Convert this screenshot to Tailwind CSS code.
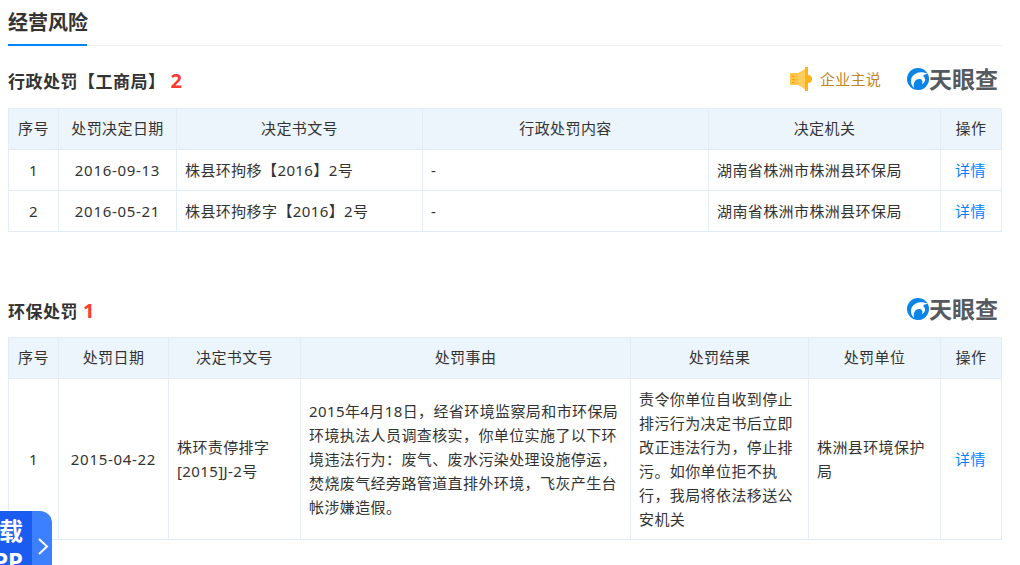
<!DOCTYPE html>
<html lang="zh-CN">
<head>
  <meta charset="UTF-8">
  <title>经营风险</title>
  <script src="https://cdn.jsdelivr.net/npm/@tailwindcss/browser@4"></script>
</head>
<body class="relative h-[565px] w-[1020px] overflow-hidden bg-white font-['Noto_Sans','Noto_Sans_CJK_SC',sans-serif] text-[15px] tracking-[0.4px] text-[#333]">
  <div class="pl-2 pr-[18px]">
    <!-- Section title -->
    <div class="h-[46px] border-b border-[#f0f2f5]">
      <div class="inline-block h-[46px] w-[79px] border-b-2 border-[#0084ff] pt-[6px] text-[20px] leading-[34px] font-bold tracking-normal whitespace-nowrap text-[#333]">经营风险</div>
    </div>

    <!-- 行政处罚 -->
    <div class="mt-[17px] flex h-[45px] items-center justify-between pb-[8px]">
      <div class="text-[17px] font-bold tracking-[0.5px]">行政处罚【工商局】<span class="ml-[5px] text-[20px] leading-[20px] text-[#ff3b30]">2</span></div>
      <div class="mr-[4px] -mt-[5px] flex items-center">
        <svg width="22" height="24" viewBox="0 0 22 24" class="mr-[8px]">
          <rect x="0" y="6" width="8" height="12" fill="#ffc444"/>
          <rect x="2" y="9" width="3" height="1" fill="#f5a623"/>
          <rect x="2" y="12" width="3" height="1" fill="#f5a623"/>
          <rect x="2" y="15" width="3" height="1" fill="#f5a623"/>
          <path d="M8 6 L15 2 V22 L8 18 Z" fill="#ffcd5c"/>
          <rect x="15" y="0" width="3" height="24" fill="#ffb31a"/>
          <path d="M18 8 a4 4 0 0 1 0 8 Z" fill="#ffb31a"/>
        </svg>
        <span class="mr-[26px] text-[15px] tracking-[0.25px] text-[#c2851f]">企业主说</span>
        <svg width="22" height="22" viewBox="0 0 22 22">
          <circle cx="11" cy="11" r="11" fill="#0a84e8"/>
          <path d="M21 6 C15 3 8 4 5 9 C3 13 4 17 7 20 C6 15 8 11 12 11 C15 11 16 13 15 16 C18 15 19 11 17 9 C15 7 18 6 21 6 Z" fill="#fff"/>
          <path d="M9 21 C9 17 11 14 13 14 C13 17 15 19 18 19 C15 22 12 22 9 21 Z" fill="#0a84e8"/>
        </svg>
        <span class="text-[23px] leading-[24px] font-bold tracking-normal text-[#555a60]">天眼查</span>
      </div>
    </div>
    <table class="w-[994px] table-fixed border-collapse border border-[#e3edf6]">
      <colgroup>
        <col class="w-[50px]"><col class="w-[118px]"><col class="w-[246px]"><col class="w-[286px]"><col class="w-[232px]"><col class="w-[61px]">
      </colgroup>
      <thead class="bg-[#edf5fc]">
        <tr class="h-[41px] text-center">
          <th class="border border-[#e3edf6] pb-[1px] font-normal">序号</th>
          <th class="border border-[#e3edf6] pb-[1px] font-normal">处罚决定日期</th>
          <th class="border border-[#e3edf6] pb-[1px] font-normal">决定书文号</th>
          <th class="border border-[#e3edf6] pb-[1px] font-normal">行政处罚内容</th>
          <th class="border border-[#e3edf6] pb-[1px] font-normal">决定机关</th>
          <th class="border border-[#e3edf6] pb-[1px] font-normal">操作</th>
        </tr>
      </thead>
      <tbody>
        <tr class="h-[41px]">
          <td class="border border-[#e3edf6] text-center">1</td>
          <td class="border border-[#e3edf6] text-center tracking-[0.7px]">2016-09-13</td>
          <td class="border border-[#e3edf6] px-2">株县环拘移【2016】2号</td>
          <td class="border border-[#e3edf6] px-2">-</td>
          <td class="border border-[#e3edf6] px-2">湖南省株洲市株洲县环保局</td>
          <td class="border border-[#e3edf6] pr-[1px] text-center text-[#0084ff]">详情</td>
        </tr>
        <tr class="h-[41px]">
          <td class="border border-[#e3edf6] text-center">2</td>
          <td class="border border-[#e3edf6] text-center tracking-[0.7px]">2016-05-21</td>
          <td class="border border-[#e3edf6] px-2">株县环拘移字【2016】2号</td>
          <td class="border border-[#e3edf6] px-2">-</td>
          <td class="border border-[#e3edf6] px-2">湖南省株洲市株洲县环保局</td>
          <td class="border border-[#e3edf6] pr-[1px] text-center text-[#0084ff]">详情</td>
        </tr>
      </tbody>
    </table>

    <!-- 环保处罚 -->
    <div class="mt-[54px] flex h-[51px] items-center justify-between">
      <div class="text-[17px] font-bold tracking-[0.5px]">环保处罚<span class="ml-[5px] text-[20px] leading-[20px] text-[#ff3b30]">1</span></div>
      <div class="mr-[4px] -mt-[5px] flex items-center">
        <svg width="22" height="22" viewBox="0 0 22 22">
          <circle cx="11" cy="11" r="11" fill="#0a84e8"/>
          <path d="M21 6 C15 3 8 4 5 9 C3 13 4 17 7 20 C6 15 8 11 12 11 C15 11 16 13 15 16 C18 15 19 11 17 9 C15 7 18 6 21 6 Z" fill="#fff"/>
          <path d="M9 21 C9 17 11 14 13 14 C13 17 15 19 18 19 C15 22 12 22 9 21 Z" fill="#0a84e8"/>
        </svg>
        <span class="text-[23px] leading-[24px] font-bold tracking-normal text-[#555a60]">天眼查</span>
      </div>
    </div>
    <table class="w-[994px] table-fixed border-collapse border border-[#e3edf6]">
      <colgroup>
        <col class="w-[50px]"><col class="w-[110px]"><col class="w-[132px]"><col class="w-[330px]"><col class="w-[178px]"><col class="w-[132px]"><col class="w-[61px]">
      </colgroup>
      <thead class="bg-[#edf5fc]">
        <tr class="h-[41px] text-center">
          <th class="border border-[#e3edf6] pb-[1px] font-normal">序号</th>
          <th class="border border-[#e3edf6] pb-[1px] font-normal">处罚日期</th>
          <th class="border border-[#e3edf6] pb-[1px] font-normal">决定书文号</th>
          <th class="border border-[#e3edf6] pb-[1px] font-normal">处罚事由</th>
          <th class="border border-[#e3edf6] pb-[1px] font-normal">处罚结果</th>
          <th class="border border-[#e3edf6] pb-[1px] font-normal">处罚单位</th>
          <th class="border border-[#e3edf6] pb-[1px] font-normal">操作</th>
        </tr>
      </thead>
      <tbody>
        <tr class="h-[161px] leading-[24px]">
          <td class="border border-[#e3edf6] text-center">1</td>
          <td class="border border-[#e3edf6] text-center tracking-[0.7px]">2015-04-22</td>
          <td class="border border-[#e3edf6] px-2">株环责停排字[2015]J-2号</td>
          <td class="border border-[#e3edf6] px-2">2015年4月18日，经省环境监察局和市环保局环境执法人员调查核实，你单位实施了以下环境违法行为：废气、废水污染处理设施停运，焚烧废气经旁路管道直排外环境，飞灰产生台帐涉嫌造假。</td>
          <td class="border border-[#e3edf6] px-2">责令你单位自收到停止排污行为决定书后立即改正违法行为，停止排污。如你单位拒不执行，我局将依法移送公安机关</td>
          <td class="border border-[#e3edf6] px-2">株洲县环境保护局</td>
          <td class="border border-[#e3edf6] pr-[1px] text-center text-[#0084ff]">详情</td>
        </tr>
      </tbody>
    </table>
  </div>

  <!-- Floating download badge, cut off by the window -->
  <div class="absolute top-[511px] left-0 flex h-[80px] w-[52px] overflow-hidden rounded-tr-[12px] bg-[#3d80ff]">
    <div class="w-[32px] overflow-hidden bg-[#1a5cf0] text-right text-[24px] leading-[30px] font-bold tracking-normal whitespace-nowrap text-white">
      <div class="ml-[-32px] w-[55px] pt-[5px]">下载<br>APP</div>
    </div>
    <svg width="20" height="70" viewBox="0 0 20 70">
      <path d="M7 28 L15 35.5 L7 43" fill="none" stroke="#fff" stroke-width="2"/>
    </svg>
  </div>
</body>
</html>
